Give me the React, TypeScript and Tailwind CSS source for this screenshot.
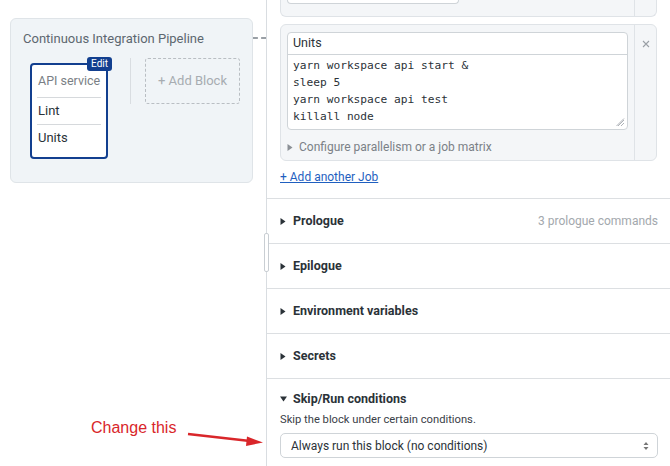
import React from "react";

const font = { fontFamily: "Roboto, 'Liberation Sans', sans-serif" };

const Tri = ({ open }: { open?: boolean }) =>
  open ? (
    <svg width="7" height="6" viewBox="0 0 7 6" className="shrink-0">
      <path d="M0 0.5h7L3.5 5.5z" fill="#2b3238" />
    </svg>
  ) : (
    <svg width="6" height="7" viewBox="0 0 6 7" className="shrink-0">
      <path d="M0.5 0v7l5-3.5z" fill="currentColor" />
    </svg>
  );

const Section = ({ title, meta }: { title: string; meta?: string }) => (
  <div className="flex h-[45px] shrink-0 items-center border-b border-[#dcdfe2] pl-[13px] pr-[12px]">
    <span className="text-[#2b3238]">
      <Tri />
    </span>
    <span className="ml-[7px] text-[12.5px] font-bold text-[#2b3238]">{title}</span>
    {meta && <span className="ml-auto text-[12px] text-[#a3a8ad]">{meta}</span>}
  </div>
);

const PipelineCard = () => (
  <div className="flex items-start pl-[10px] pt-[18px]">
    <div className="h-[165px] w-[243px] shrink-0 rounded-[6px] border border-[#dfe4e8] bg-[#f0f4f7] px-[12px] pt-[12px]">
      <div className="text-[13px] leading-[16px] text-[#5d6770]">Continuous Integration Pipeline</div>
      <div className="mt-[11px] flex items-start">
        <div className="pl-[7px] pt-[5px]">
          <div className="relative h-[96px] w-[78px] rounded-[4px] border-2 border-[#123f8f] bg-white px-[5px]">
            <span className="absolute -right-[6px] -top-[8px] rounded-[3px] bg-[#123f8f] px-[4px] text-[10px] leading-[14px] text-white">
              Edit
            </span>
            <div className="flex h-[33px] items-center whitespace-nowrap border-b border-[#d6d9dc] pl-px text-[12.5px] text-[#7a7f85]">
              API service
            </div>
            <div className="flex h-[27px] items-center border-b border-[#d6d9dc] pl-px text-[13px] text-[#2b3238]">
              Lint
            </div>
            <div className="flex h-[26px] items-center pl-px text-[13px] text-[#2b3238]">Units</div>
          </div>
        </div>
        <div className="ml-[22px] h-[46px] w-px bg-[#d9dde1]" />
        <div className="ml-[14px] flex h-[46px] w-[95px] items-center justify-center rounded-[3px] border border-dashed border-[#b9bec3] text-[13px] text-[#a7acb1]">
          + Add Block
        </div>
      </div>
    </div>
    <div className="mt-[19px] w-[13px] border-t-2 border-dashed border-[#9aa0a6]" />
  </div>
);

const JobCard = () => (
  <div className="mx-[13px] mt-[7px] flex h-[137px] shrink-0 rounded-[6px] border border-[#dfe3e7] bg-[#f4f6f8]">
    <div className="flex flex-1 flex-col px-[6px] pt-[7px]">
      <div className="h-[98px] rounded-[4px] border border-[#cfd4d8] bg-white">
        <div className="flex h-[22px] items-center border-b border-[#cfd4d8] px-[5px] text-[12.5px] text-[#2b3238]">
          Units
        </div>
        <div className="relative h-[74px] px-[5px] pt-[2px]">
          <pre
            className="text-[11.2px] leading-[17px] text-[#2b3238]"
            style={{ fontFamily: "'DejaVu Sans Mono', monospace" }}
          >
            {"yarn workspace api start &\nsleep 5\nyarn workspace api test\nkillall node"}
          </pre>
          <svg width="9" height="9" viewBox="0 0 9 9" className="absolute bottom-[2px] right-[2px]">
            <path d="M8 2L2 8M8 5L5 8M8 0.5L0.5 8" stroke="#9aa0a6" strokeWidth="0.8" />
          </svg>
        </div>
      </div>
      <div className="mt-[8px] flex items-center text-[12px] text-[#7b8187]">
        <span className="text-[#8b9096]">
          <Tri />
        </span>
        <span className="ml-[6px]">Configure parallelism or a job matrix</span>
      </div>
    </div>
    <div className="flex w-[22px] shrink-0 justify-center border-l border-[#dfe3e7] pt-[15px]">
      <svg width="8" height="8" viewBox="0 0 8 8">
        <path d="M1 1l6 6M7 1L1 7" stroke="#9aa0a6" strokeWidth="1.1" />
      </svg>
    </div>
  </div>
);

export default function App() {
  return (
    <div className="relative flex h-[466px] w-[670px] overflow-hidden bg-white" style={font}>
      <div className="w-[266px] shrink-0">
        <PipelineCard />
      </div>

      <div className="relative flex flex-1 flex-col border-l border-[#d9dde1]">
        <span className="absolute -left-[3px] top-[233px] h-[39px] w-[5px] rounded-[2px] border border-[#c9ced3] bg-white" />

        <div className="mx-[13px] flex h-[17px] shrink-0 rounded-b-[6px] border border-t-0 border-[#dfe3e7] bg-[#f4f6f8]">
          <div className="flex-1 px-[6px]">
            <div className="h-[4px] w-[172px] rounded-b-[4px] border border-t-0 border-[#cfd4d8] bg-white" />
          </div>
          <div className="w-[22px] border-l border-[#dfe3e7]" />
        </div>

        <JobCard />

        <div className="flex h-[38px] shrink-0 items-start border-b border-[#dcdfe2] px-[13px] pt-[8px]">
          <a className="text-[12px] leading-[16px] text-[#1f5fbf] underline">+ Add another Job</a>
        </div>

        <Section title="Prologue" meta="3 prologue commands" />
        <Section title="Epilogue" />
        <Section title="Environment variables" />
        <Section title="Secrets" />

        <div className="px-[13px] pr-[12px] pt-[12px]">
          <div className="flex h-[16px] items-center">
            <Tri open />
            <span className="ml-[6px] text-[12.5px] font-bold text-[#2b3238]">Skip/Run conditions</span>
          </div>
          <div className="mt-[6px] text-[11.2px] leading-[14px] text-[#3a4047]">Skip the block under certain conditions.</div>
          <div className="mt-[6px] flex h-[25px] items-center rounded-[5px] border border-[#cfd4d8] bg-white pl-[10px] pr-[8px] text-[12px] text-[#2b3238]">
            <span>Always run this block (no conditions)</span>
            <svg width="6" height="10" viewBox="0 0 6 10" className="ml-auto">
              <path d="M3 1l2.5 3h-5zM3 9l2.5-3h-5z" fill="#777" />
            </svg>
          </div>
        </div>
      </div>

      <div className="absolute left-[91px] top-[419px] text-[16px] leading-[18px] text-[#d9262a]" style={{ fontFamily: "'Liberation Sans', Arial, sans-serif" }}>
        Change this
      </div>
      <svg width="80" height="20" viewBox="0 0 80 20" className="absolute left-[186px] top-[428px]">
        <path d="M2 6L64 13" stroke="#d9262a" strokeWidth="2.4" />
        <path d="M77 14.5L61 8.5L60 18z" fill="#d9262a" />
      </svg>
    </div>
  );
}
